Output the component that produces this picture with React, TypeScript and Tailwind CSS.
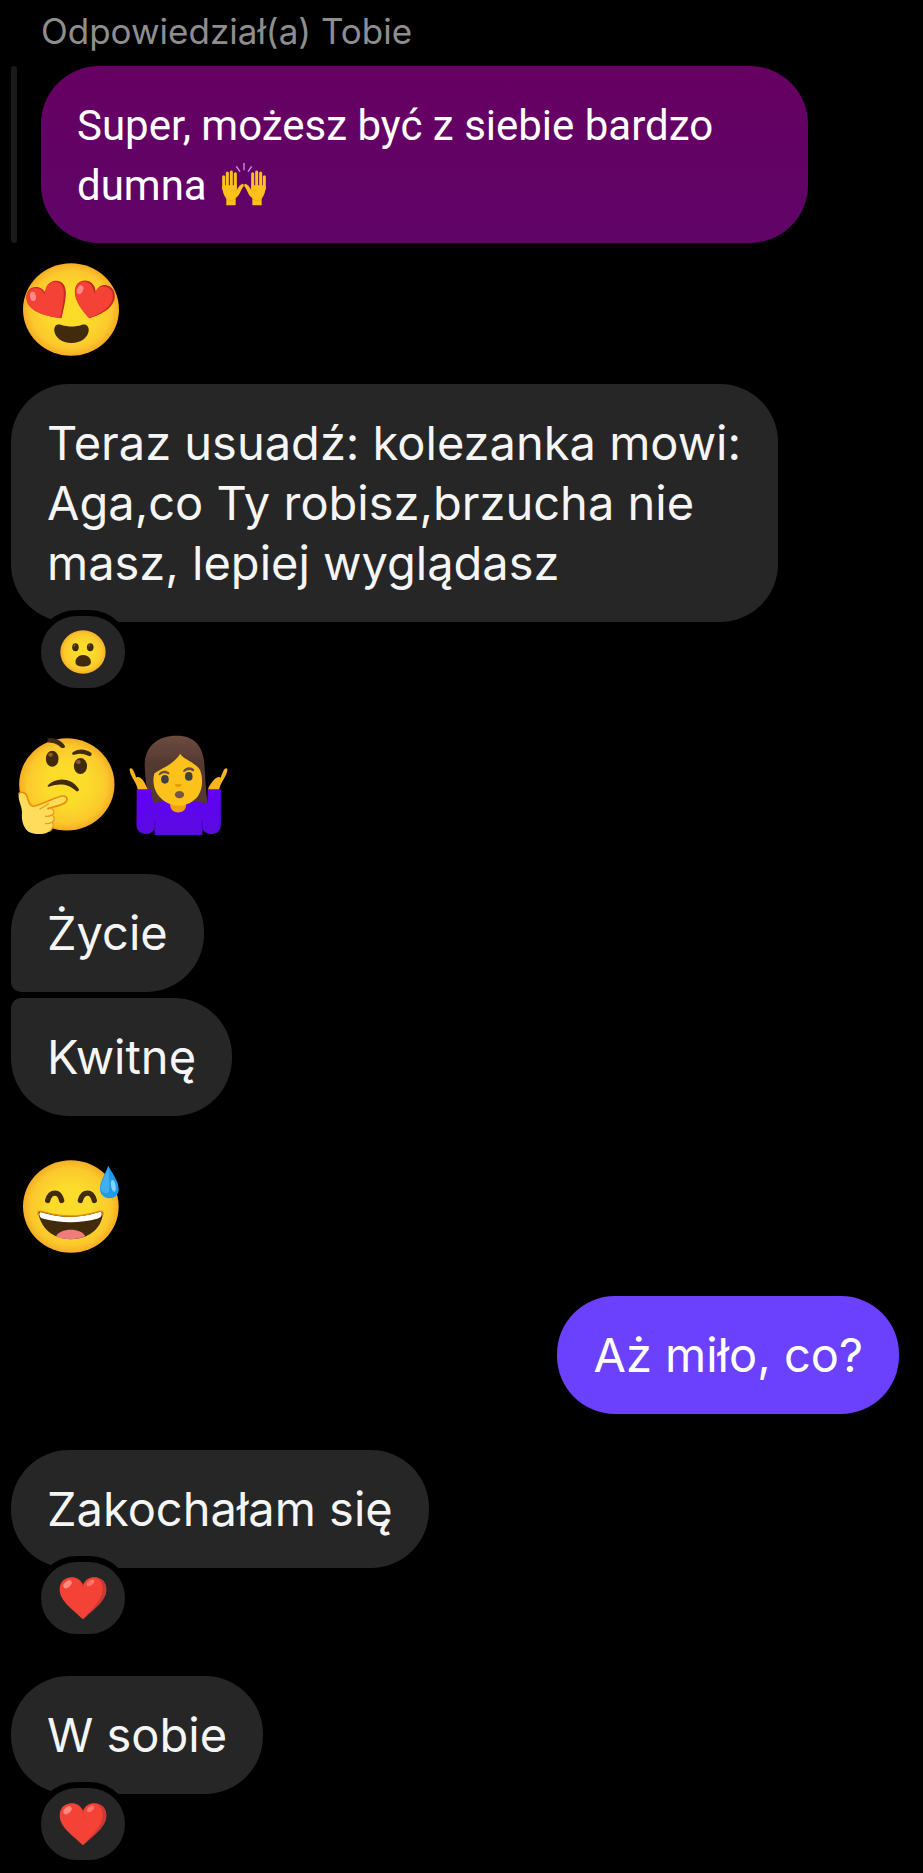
import type { ReactNode } from "react";
import clsx from "clsx";

function FaceGradient({ id }: { id: string }) {
  return (
    <defs>
      <radialGradient id={id} cx="0.5" cy="0.5" r="0.52">
        <stop offset="0.4" stopColor="#fcdc2b" />
        <stop offset="0.8" stopColor="#fbc92c" />
        <stop offset="1" stopColor="#f5a623" />
      </radialGradient>
    </defs>
  );
}

function HeartEyes() {
  return (
    <svg viewBox="38 38 289 279" className="h-[93px] w-24" role="img" aria-label="😍">
      <FaceGradient id="heart-eyes-face" />
      <ellipse cx="182.5" cy="177.5" rx="144.5" ry="139.5" fill="url(#heart-eyes-face)" />
      <path
        d="M154 204C110 198 62 186 50 154C42 128 58 110 76 110C92 110 100 118 106 128C104 108 118 92 136 91C156 90 168 106 167 130C166 158 158 184 154 204Z"
        fill="#c62828"
      />
      <path
        d="M150 203C108 197 62 185 51 154C43 130 58 113 74 113C90 113 99 122 104 134C102 112 116 95 133 94C151 93 162 108 161 130C160 158 154 184 150 203Z"
        fill="#f44336"
      />
      <path
        d="M238 204C222 186 194 156 194 124C194 102 208 90 224 90C242 90 256 104 257 124C264 108 276 101 292 105C310 110 318 128 313 148C304 178 268 194 238 204Z"
        fill="#c62828"
      />
      <path
        d="M236 203C222 186 195 156 195 126C195 105 207 93 221 93C238 93 251 108 253 130C260 112 272 105 287 109C304 114 312 128 307 148C298 176 264 193 236 203Z"
        fill="#f44336"
      />
      <ellipse cx="68" cy="138" rx="9" ry="14" fill="#ff8a80" transform="rotate(-8 68 138)" />
      <ellipse cx="210" cy="118" rx="9" ry="14" fill="#ff8a80" transform="rotate(22 210 118)" />
      <path
        d="M132 240C132 224 142 220 154 224C174 230 196 230 214 224C226 220 236 226 236 240C234 263 212 278 184 278C156 278 134 263 132 240Z"
        fill="#422b0d"
      />
    </svg>
  );
}

function SweatSmile() {
  return (
    <svg viewBox="69 60 288 278" className="h-[93px] w-24" role="img" aria-label="😅">
      <FaceGradient id="sweat-face" />
      <ellipse cx="212.5" cy="199" rx="143.5" ry="139" fill="url(#sweat-face)" />
      <g fill="none" stroke="#422b0d" strokeWidth="16" strokeLinecap="round">
        <path d="M143 181C147 166 155 159 165 159C175 159 181 166 185 181" />
        <path d="M241 181C245 166 253 159 263 159C273 159 279 166 283 181" />
      </g>
      <path
        d="M116 224C112 212 120 212 134 217C184 232 240 232 290 216C304 211 312 214 308 226C300 270 262 297 212 297C162 297 126 268 116 224Z"
        fill="#422b0d"
      />
      <path
        d="M118 222C118 214 124 216 134 219C184 234 240 234 290 218C300 215 306 214 305 222C304 230 300 232 294 235C240 250 184 250 130 236C122 234 119 230 118 222Z"
        fill="#fff"
      />
      <path d="M168 289C174 276 192 269 212 269C232 269 250 276 256 288C230 300 194 300 168 289Z" fill="#ef7b7b" />
      <path
        d="M115 225C110 210 120 211 134 216C184 231 240 231 290 215C304 210 313 213 308 226"
        fill="none"
        stroke="#eb8f00"
        strokeWidth="4"
      />
      <path d="M325 77C334 96 356 122 356 147C356 164 344 174 328 174C311 174 300 163 300 146C300 122 318 98 325 77Z" fill="#1e9be9" />
      <path d="M325 79C320 100 303 122 302 144C306 158 318 162 326 156C332 140 326 110 325 79Z" fill="#42adf0" />
      <ellipse cx="340" cy="137" rx="7" ry="18" fill="#81d4fa" transform="rotate(-10 340 137)" />
    </svg>
  );
}

function Thinking() {
  return (
    <svg viewBox="54 50 292 294" className="h-[98px] w-[97px]" role="img" aria-label="🤔">
      <FaceGradient id="thinking-face" />
      <ellipse cx="201" cy="192" rx="143.5" ry="139" fill="url(#thinking-face)" />
      <path d="M143 54C164 50 188 60 196 78C194 84 186 84 182 80C170 68 156 66 143 66Z" fill="#422b0d" />
      <path d="M218 96C234 84 258 84 275 98C278 104 272 110 266 106C250 98 236 98 224 103C218 104 215 100 218 96Z" fill="#422b0d" />
      <ellipse cx="157" cy="115" rx="19" ry="24" fill="#422b0d" />
      <ellipse cx="242" cy="137" rx="20" ry="24" fill="#422b0d" />
      <ellipse cx="152" cy="103" rx="7" ry="6" fill="#896024" />
      <ellipse cx="236" cy="125" rx="7" ry="6" fill="#896024" />
      <path d="M144 195C168 170 214 170 237 206C239 213 232 215 228 211C206 190 176 188 152 198C146 201 141 199 144 195Z" fill="#422b0d" />
      <path
        d="M56 222C60 212 78 216 82 230C85 244 90 258 100 257C122 254 150 238 182 228C197 224 206 234 199 244C190 255 166 258 154 264C165 270 164 280 158 284C166 291 164 301 157 306C163 314 159 326 149 333C136 343 110 344 92 338C70 328 64 300 66 278C67 258 54 244 56 222Z"
        fill="#ffdc5c"
      />
      <path
        d="M57 220C61 212 78 216 82 230C85 246 90 259 100 258C122 254 150 238 182 228C197 224 206 234 199 244C190 255 166 258 144 265"
        fill="none"
        stroke="#eb8f00"
        strokeWidth="5"
        strokeLinecap="round"
      />
      <path
        d="M154 264C165 270 164 280 157 284C166 291 164 301 157 306C163 314 159 326 149 333M156 284C150 288 142 289 137 288M156 306C150 310 142 311 137 310M120 266C128 262 138 258 146 250"
        fill="none"
        stroke="#eb9c14"
        strokeWidth="4"
        strokeLinecap="round"
      />
    </svg>
  );
}

function WomanShrugging() {
  return (
    <svg viewBox="28 28 298 302" className="h-[100px] w-[99px]" role="img" aria-label="🤷‍♀️">
      <defs>
        <linearGradient id="shrug-shirt" x1="0" y1="0" x2="0" y2="1">
          <stop offset="0" stopColor="#6200f5" />
          <stop offset="1" stopColor="#5a0ce0" />
        </linearGradient>
        <linearGradient id="shrug-hair" x1="0" y1="0" x2="0" y2="1">
          <stop offset="0" stopColor="#6d4c41" />
          <stop offset="0.4" stopColor="#543930" />
        </linearGradient>
      </defs>
      <path d="M75 120C74 60 118 29 172 30C226 30 248 62 254 104C258 140 258 190 265 234L222 240H96C82 208 76 160 75 120Z" fill="url(#shrug-hair)" />
      <path d="M29 131C34 123 42 132 49 156C60 150 72 162 82 188L84 194H54C52 172 31 156 29 131Z" fill="#fcb61b" />
      <path d="M325 131C320 123 312 132 305 156C294 150 282 162 268 186L266 194H300C302 172 323 156 325 131Z" fill="#fcb61b" />
      <path d="M51 192H94C95 208 98 222 104 236C118 228 130 226 148 227H208C226 226 240 228 250 234L264 232L265 192H305V300C304 318 292 328 276 327C264 327 256 322 249 312V330H105V312C98 322 90 327 78 327C62 327 51 316 50 300Z" fill="url(#shrug-shirt)" />
      <path d="M105 312V285M249 312V285" stroke="#4806b8" strokeWidth="3" />
      <path d="M152 230H200V242C198 256 188 262 176 262C164 262 154 256 152 242Z" fill="#f0a010" />
      <path
        d="M182 85C194 104 228 110 242 134C252 160 250 192 236 212C222 230 200 242 176 242C154 242 130 230 114 208C102 190 98 166 104 144C124 130 166 114 182 85Z"
        fill="#fcc21b"
      />
      <path d="M117 147C122 134 140 133 149 142C151 146 147 148 144 146C136 142 128 144 122 149C119 150 116 149 117 147Z" fill="#6d4c41" />
      <path d="M191 136C198 123 216 122 224 132C226 136 222 139 219 137C211 131 203 133 196 139C193 140 190 139 191 136Z" fill="#6d4c41" />
      <ellipse cx="136" cy="162" rx="11.5" ry="13" fill="#404040" />
      <ellipse cx="208" cy="153" rx="11.5" ry="13" fill="#404040" />
      <path d="M166 177H187C186 188 167 188 166 177Z" fill="#e59600" />
      <ellipse cx="180" cy="208" rx="14" ry="11" fill="#795548" />
    </svg>
  );
}

function RaisedHands() {
  return (
    <svg viewBox="660 490 138 132" className="ml-[14px] inline-block h-11 w-[46px] align-[-6px]" role="img" aria-label="🙌">
      <path d="M706 503L717 519M729 493V515M752 503L741 519" stroke="#c79be8" strokeWidth="4" />
      {["", "translate(1458 0) scale(-1 1)"].map((flip) => (
        <g key={flip} transform={flip}>
          <g stroke="#fcc21b" strokeWidth="9" strokeLinecap="round">
            <path d="M668 534V570M679 523V566M691 520V566M703 525V570" />
          </g>
          <path
            d="M664 560H707V575C711 566 717 557 725 555C729 556 729 561 727 564C720 571 716 592 704 598V620H676V600C668 590 664 578 664 560Z"
            fill="#fcc21b"
          />
          <path d="M692 578C698 572 702 575 704 580M676 602C686 607 696 606 704 600" fill="none" stroke="#e9a112" strokeWidth="2" />
        </g>
      ))}
    </svg>
  );
}

function Wow() {
  return (
    <svg viewBox="179 779 140 133" className="h-11 w-[46px]" role="img" aria-label="😮">
      <FaceGradient id="wow-face" />
      <ellipse cx="249" cy="845.5" rx="69" ry="66" fill="url(#wow-face)" />
      <ellipse cx="226" cy="831" rx="10" ry="12" fill="#422b0d" />
      <ellipse cx="271" cy="831" rx="10" ry="12" fill="#422b0d" />
      <ellipse cx="223" cy="826" rx="3" ry="3" fill="#896024" />
      <ellipse cx="268" cy="826" rx="3" ry="3" fill="#896024" />
      <path d="M249 855C263 855 273 864 273 876C273 886 262 890 249 890C236 890 226 886 226 876C226 864 236 855 249 855Z" fill="#422b0d" />
    </svg>
  );
}

function RedHeart() {
  return (
    <svg viewBox="177 439 146 131" className="h-[43px] w-12" role="img" aria-label="❤️">
      <path
        d="M250 463C257 447 270 440 284 440C306 440 321 455 321 477C321 512 282 537 250 568C218 537 179 512 179 477C179 455 194 440 216 440C230 440 243 447 250 463Z"
        fill="#f44336"
      />
      <path
        d="M284 440C306 440 321 455 321 477C321 512 282 537 250 568C276 536 310 510 310 476C310 458 302 444 284 440Z"
        fill="#c93a35"
      />
      <path d="M250 463C246 452 238 446 230 443C240 446 248 456 250 474C252 456 260 446 270 443C260 447 254 452 250 463Z" fill="#c93a35" />
      <ellipse cx="203" cy="461" rx="15" ry="9" fill="#ff8a80" transform="rotate(-42 203 461)" />
      <ellipse cx="273" cy="457" rx="13" ry="7" fill="#ff7669" transform="rotate(-38 273 457)" />
    </svg>
  );
}

function Bubble({ children, className }: { children: ReactNode; className?: string }) {
  return (
    <p
      className={clsx(
        "w-fit max-w-[767px] rounded-[58px] px-9 py-[29px] font-['Inter',sans-serif] text-[47px] leading-[60px]",
        className ?? "bg-[#262626] text-[#f5f5f5]",
      )}
    >
      {children}
    </p>
  );
}

function Reaction({ children }: { children: ReactNode }) {
  return (
    <button className="relative -mt-3 ml-6 flex h-21 w-24 items-center justify-center rounded-full border-6 border-black bg-[#262626]">
      {children}
    </button>
  );
}

export default function App() {
  return (
    <main className="flex min-h-screen flex-col items-start bg-black pr-6 pb-[7px] pl-[11px]">
      <div className="ml-[30px] pt-[10px] font-['Inter',sans-serif] text-[35px] leading-[42px] text-[#8e8e8e]">
        Odpowiedział(a) Tobie
      </div>

      <div className="mt-[14px] flex gap-6">
        <div className="w-[6px] shrink-0 rounded-full bg-[#1a1a1a]" />
        <p className="max-w-[767px] rounded-[58px] bg-linear-to-b from-[#660062] to-[#600468] px-9 pt-[30px] pb-[27px] font-['Roboto',sans-serif] text-[42px] leading-[60px] text-white">
          Super, możesz być z siebie bardzo dumna
          <RaisedHands />
        </p>
      </div>

      <div className="mt-5 ml-3">
        <HeartEyes />
      </div>

      <div className="mt-7">
        <Bubble>Teraz usuadź: kolezanka mowi: Aga,co Ty robisz,brzucha nie masz, lepiej wyglądasz</Bubble>
        <Reaction>
          <Wow />
        </Reaction>
      </div>

      <div className="mt-[41px] ml-[7px] flex items-end gap-[14px]">
        <Thinking />
        <WomanShrugging />
      </div>

      <div className="mt-[39px] flex flex-col gap-[6px]">
        <Bubble className="rounded-bl-[10px] bg-[#262626] text-[#f5f5f5]">Życie</Bubble>
        <Bubble className="rounded-tl-[10px] bg-[#262626] text-[#f5f5f5]">Kwitnę</Bubble>
      </div>

      <div className="mt-11 ml-3">
        <SweatSmile />
      </div>

      <div className="mt-[43px] self-end">
        <Bubble className="bg-[#6c41fd] text-white">Aż miło, co?</Bubble>
      </div>

      <div className="mt-9">
        <Bubble>Zakochałam się</Bubble>
        <Reaction>
          <RedHeart />
        </Reaction>
      </div>

      <div className="mt-9">
        <Bubble>W sobie</Bubble>
        <Reaction>
          <RedHeart />
        </Reaction>
      </div>
    </main>
  );
}
